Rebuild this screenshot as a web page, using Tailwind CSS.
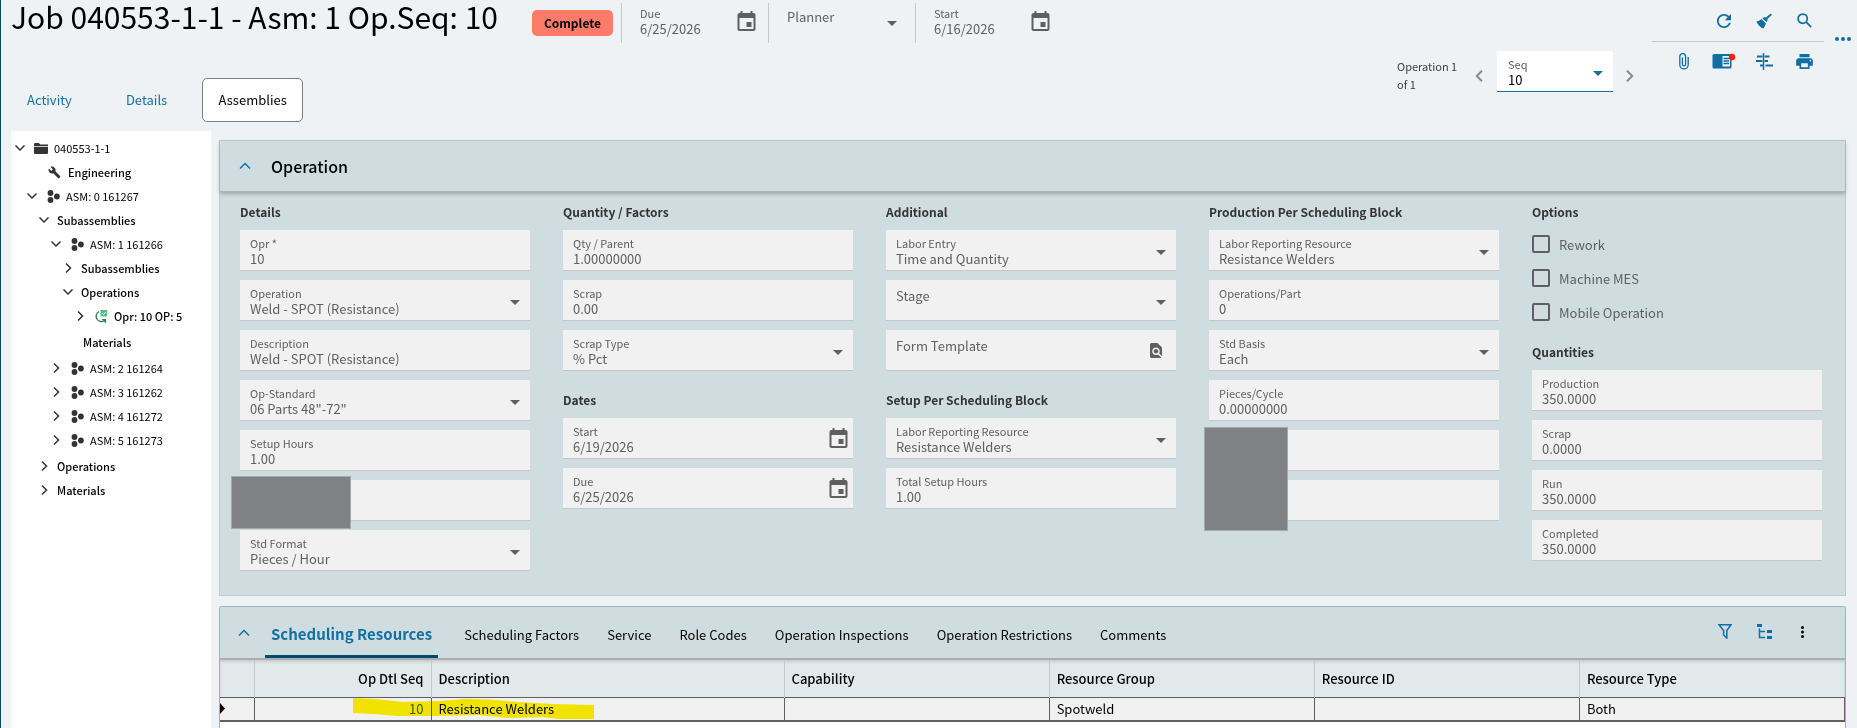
<!DOCTYPE html>
<html lang="en">
<head>
    <meta charset="UTF-8">
    <meta name="viewport" content="width=device-width, initial-scale=1.0">
    <title>Job 040553-1-1</title>
    <script src="https://cdn.jsdelivr.net/npm/@tailwindcss/browser@4"></script>
</head>

<body class="flex h-screen flex-col overflow-hidden border-l border-[#004b66] bg-[#eef2f5] font-['Noto_Sans_CJK_SC','Noto_Sans',sans-serif] text-[13px] text-black">

    <!-- Icon sprite -->
    <svg class="hidden">
        <symbol id="caret" viewBox="0 0 10 5"><path d="M0 0h10L5 5z" fill="currentColor"/></symbol>
        <symbol id="down" viewBox="0 0 12 12"><path d="M1.500 3.500 6 8l4.500-4.500" fill="none" stroke="currentColor" stroke-width="1.500"/></symbol>
        <symbol id="right" viewBox="0 0 12 12"><path d="M4 1.500 8.500 6 4 10.500" fill="none" stroke="currentColor" stroke-width="1.500"/></symbol>
        <symbol id="up" viewBox="0 0 12 12"><path d="M1 8.500 6 3.500l5 5" fill="none" stroke="currentColor" stroke-width="1.500"/></symbol>
        <symbol id="calendar" viewBox="3 1 18 20"><path d="M17 12h-5v5h5v-5zM16 1v2H8V1H6v2H5c-1.110 0-1.990.9-1.990 2L3 19c0 1.100.89 2 2 2h14c1.100 0 2-.9 2-2V5c0-1.100-.9-2-2-2h-1V1h-2zm3 18H5V8h14v11z" fill="currentColor"/></symbol>
        <symbol id="asm" viewBox="0 0 13 13"><g fill="currentColor"><circle cx="3.500" cy="3" r="2.900"/><circle cx="3.500" cy="10" r="2.900"/><circle cx="9.900" cy="6.500" r="2.900"/></g></symbol>
        <symbol id="folder" viewBox="0 0 14 11"><path d="M0 1.200Q0 0 1.200 0h3.600l1.500 1.400H14v1.500H0zM0 3.700h14v6.100Q14 11 12.800 11H1.200Q0 11 0 9.800z" fill="currentColor"/></symbol>
        <symbol id="wrench" viewBox="0 0 24 24"><path d="M22.700 19l-9.100-9.100c.9-2.300.4-5-1.500-6.900-2-2-5-2.400-7.400-1.300L9 6 6 9 1.600 4.700C.4 7.100.9 10.100 2.900 12.100c1.900 1.900 4.600 2.400 6.900 1.500l9.100 9.100c.4.4 1 .4 1.400 0l2.300-2.300c.5-.4.5-1.100.1-1.400z" fill="currentColor"/></symbol>
    </svg>

    <header class="flex shrink-0 items-start justify-between">
        <div class="pl-[10px]">
            <div class="flex h-[43px] items-start">
                <h1 class="text-[30px] leading-8 whitespace-nowrap">Job 040553-1-1 - Asm: 1 Op.Seq: 10</h1>
                <span class="mt-[10px] ml-[34px] flex h-[26px] w-[81px] items-center justify-center rounded-[5px] bg-[#ff7b69] text-[12px] font-bold">Complete</span>
                <div class="relative mt-[3px] ml-2 h-10 w-[147px] border-l border-[#c4c8ca] pt-[2px] pl-[18px] text-[#5f5f5f]">
                    <label for="due" class="block text-[11px] leading-4">Due</label>
                    <input id="due" type="text" value="6/25/2026" class="block h-4 w-20 leading-4 outline-none">
                    <button type="button" aria-label="Pick due date" class="absolute top-2 right-3"><svg class="h-5 w-[19px]"><use href="#calendar"/></svg></button>
                </div>
                <div class="relative mt-[3px] h-10 w-[147px] border-l border-[#c4c8ca] pt-[6px] pl-[18px] text-[#5f5f5f]">
                    <label for="planner" class="block leading-4">Planner</label>
                    <select id="planner" class="absolute inset-0 w-full appearance-none outline-none"><option></option></select>
                    <svg class="pointer-events-none absolute top-[18px] right-[18px] h-[5px] w-[10px]"><use href="#caret"/></svg>
                </div>
                <div class="relative mt-[3px] h-10 w-[147px] border-l border-[#c4c8ca] pt-[2px] pl-[18px] text-[#5f5f5f]">
                    <label for="start" class="block text-[11px] leading-4">Start</label>
                    <input id="start" type="text" value="6/16/2026" class="block h-4 w-20 leading-4 outline-none">
                    <button type="button" aria-label="Pick start date" class="absolute top-2 right-3"><svg class="h-5 w-[19px]"><use href="#calendar"/></svg></button>
                </div>
            </div>
            <nav class="mt-[35px] mb-[9px] flex h-11 items-center text-[13px] text-[#1270a3]">
                <a href="#" class="pl-4">Activity</a>
                <a href="#" class="pl-[54px]">Details</a>
                <a href="#" class="ml-[35px] flex h-11 w-[101px] items-center justify-center rounded-[5px] border border-[#7d7d7d] bg-white text-black">Assemblies</a>
            </nav>
        </div>

        <div class="flex items-start">
            <p class="mt-[57px] w-[66px] text-[11px] leading-[18px] text-[#3c3c3c]">Operation 1 of 1</p>
            <button type="button" aria-label="Previous operation" class="mt-[66px] ml-[6px] flex h-5 w-5 items-center justify-center text-[#8a8a8a]">
                <svg class="h-3 w-2" viewBox="0 0 8 12"><path d="M7 .8 1.800 6 7 11.200" fill="none" stroke="currentColor" stroke-width="2"/></svg>
            </button>
            <div class="relative mt-[51px] ml-2 h-[41px] w-[116px] border-b border-[#1270a3] bg-white pt-[5px] pl-[11px]">
                <label for="seq" class="block text-[11px] leading-4 text-[#5f5f5f]">Seq</label>
                <select id="seq" class="block h-4 w-full appearance-none leading-4 outline-none"><option>10</option></select>
                <svg class="pointer-events-none absolute top-5 right-[10px] h-[5px] w-[10px] text-[#1270a3]"><use href="#caret"/></svg>
            </div>
            <button type="button" aria-label="Next operation" class="mt-[66px] ml-[7px] flex h-5 w-5 items-center justify-center text-[#8a8a8a]">
                <svg class="h-3 w-2" viewBox="0 0 8 12"><path d="M1 .8 6.200 6 1 11.200" fill="none" stroke="currentColor" stroke-width="2"/></svg>
            </button>
            <div class="ml-3 w-[172px] text-[#0f6ea2]">
                <div class="flex h-[42px] items-center justify-end border-b border-[#c4c8ca]">
                    <button type="button" aria-label="Refresh" class="flex w-10 justify-center">
                        <svg class="h-[14px] w-[14px]" viewBox="4 4 16 16"><path d="M17.650 6.350C16.200 4.900 14.210 4 12 4c-4.420 0-7.990 3.580-7.990 8s3.570 8 7.990 8c3.730 0 6.840-2.550 7.730-6h-2.080c-.82 2.330-3.040 4-5.650 4-3.310 0-6-2.690-6-6s2.690-6 6-6c1.660 0 3.140.69 4.220 1.780L13 11h7V4l-2.350 2.350z" fill="currentColor"/></svg>
                    </button>
                    <button type="button" aria-label="Clear" class="flex w-10 justify-center">
                        <svg class="h-4 w-4" viewBox="0 0 16 16"><path d="M14.700.5 16 1.800l-4.600 4.300q.6 1.600-.8 3.200L6.300 5.200q1.700-1.400 3.600-.7zM5.500 6l4.500 4.400q-1.200 3-2.500 5Q3.300 14.500.3 8.500 3.300 8.200 5.500 6z" fill="currentColor"/></svg>
                    </button>
                    <button type="button" aria-label="Search" class="flex w-10 justify-center">
                        <svg class="h-[15px] w-[15px]" viewBox="0 0 15 15" fill="none" stroke="currentColor" stroke-width="1.700"><circle cx="5.700" cy="5.700" r="4.600"/><path d="m9.200 9.200 5 5"/></svg>
                    </button>
                </div>
                <div class="flex h-[38px] items-center justify-end">
                    <button type="button" aria-label="Attachments" class="flex w-10 justify-center">
                        <svg class="h-[17px] w-[10px]" viewBox="0 0 10 17" fill="none" stroke="currentColor" stroke-width="1.300"><path d="M9.200 4v7.700a4.200 4.200 0 0 1-8.400 0V3.600a2.900 2.900 0 0 1 5.800 0v7.600a1.600 1.600 0 0 1-3.200 0V4.500"/></svg>
                    </button>
                    <button type="button" aria-label="Memo" class="flex w-10 justify-center">
                        <svg class="h-4 w-6" viewBox="0 0 24 16"><rect x=".5" y="1" width="19" height="14.500" rx="1.500" fill="currentColor"/><path d="M10.500 3H18v10.500h-7.500z" fill="#eef2f5"/><path d="M11.500 5.500h5.500M11.500 8h5.500M11.500 10.500h5.500" stroke="currentColor" stroke-width="1.400"/><circle cx="20" cy="4" r="3.200" fill="#ff1a0a"/></svg>
                    </button>
                    <button type="button" aria-label="Schedule" class="flex w-10 justify-center">
                        <svg class="h-[17px] w-[17px]" viewBox="0 0 17 17" fill="none" stroke="currentColor" stroke-width="2"><path d="M7.500 0v17" stroke-width="1.500"/><path d="M1 3.500h5.500M0 8h6.500M4 12.500h3M8.500 3.500h5M8.500 8h3.500M9.500 12.500H17"/></svg>
                    </button>
                    <button type="button" aria-label="Print" class="flex w-10 justify-center">
                        <svg class="h-[15px] w-[17px]" viewBox="2 3 20 18"><path d="M19 8H5c-1.660 0-3 1.340-3 3v6h4v4h12v-4h4v-6c0-1.660-1.340-3-3-3zm-3 11H8v-5h8v5zm3-7c-.55 0-1-.45-1-1s.45-1 1-1 1 .45 1 1-.45 1-1 1zm-1-9H6v4h12V3z" fill="currentColor"/></svg>
                    </button>
                </div>
            </div>
            <button type="button" aria-label="More" class="mt-[37px] ml-1 flex w-[29px] justify-center text-[#0f6ea2]">
                <svg class="h-1 w-4" viewBox="0 0 16 4" fill="currentColor"><circle cx="2" cy="2" r="2"/><circle cx="8" cy="2" r="2"/><circle cx="14" cy="2" r="2"/></svg>
            </button>
        </div>
    </header>

    <div class="flex min-h-0 flex-1 pl-[10px]">

        <!-- Job tree -->
        <aside class="w-[200px] shrink-0 bg-white pt-[5px] text-[11px] leading-6 whitespace-nowrap">
            <ul>
                <li class="flex h-6 items-center pl-[3px]"><svg class="h-3 w-3 text-[#333]"><use href="#down"/></svg><svg class="ml-2 h-[11px] w-[14px] text-[#333]"><use href="#folder"/></svg><span class="pl-[6px]">040553-1-1</span></li>
                <li class="flex h-6 items-center pl-[37px]"><svg class="h-[13px] w-[13px] text-[#333]"><use href="#wrench"/></svg><span class="pl-[7px] font-medium">Engineering</span></li>
                <li class="flex h-6 items-center pl-[15px]"><svg class="h-3 w-3 text-[#333]"><use href="#down"/></svg><svg class="ml-[9px] h-[13px] w-[13px] text-[#333]"><use href="#asm"/></svg><span class="pl-[6px]">ASM: 0 161267</span></li>
                <li class="flex h-6 items-center pl-[27px]"><svg class="h-3 w-3 text-[#333]"><use href="#down"/></svg><span class="pl-[7px] font-medium">Subassemblies</span></li>
                <li class="flex h-6 items-center pl-[39px]"><svg class="h-3 w-3 text-[#333]"><use href="#down"/></svg><svg class="ml-[9px] h-[13px] w-[13px] text-[#333]"><use href="#asm"/></svg><span class="pl-[6px]">ASM: 1 161266</span></li>
                <li class="flex h-6 items-center pl-[51px]"><svg class="h-3 w-3 text-[#333]"><use href="#right"/></svg><span class="pl-[7px] font-medium">Subassemblies</span></li>
                <li class="flex h-6 items-center pl-[51px]"><svg class="h-3 w-3 text-[#333]"><use href="#down"/></svg><span class="pl-[7px] font-medium">Operations</span></li>
                <li class="flex h-6 items-center pl-[63px]"><svg class="h-3 w-3 text-[#333]"><use href="#right"/></svg><svg class="ml-[8px] h-[13px] w-[13px]" viewBox="0 0 13 13"><path d="M5 1.500A5 5 0 1 0 10 11" fill="none" stroke="#2f7d55" stroke-width="1.300"/><path d="M7.500 9H12v4.500z" fill="#2f7d55"/><path d="M6.500 0H13v6.500H6.500z" fill="#4fc08d"/><path d="m8 3.200 1.400 1.400 2.300-2.600" fill="none" stroke="#fff"/></svg><span class="pl-[7px] font-medium">Opr: 10 OP: 5</span></li>
                <li class="my-0.5 flex h-6 items-center pl-[72px]"><span class="font-medium">Materials</span></li>
                <li class="flex h-6 items-center pl-[39px]"><svg class="h-3 w-3 text-[#333]"><use href="#right"/></svg><svg class="ml-[9px] h-[13px] w-[13px] text-[#333]"><use href="#asm"/></svg><span class="pl-[6px]">ASM: 2 161264</span></li>
                <li class="flex h-6 items-center pl-[39px]"><svg class="h-3 w-3 text-[#333]"><use href="#right"/></svg><svg class="ml-[9px] h-[13px] w-[13px] text-[#333]"><use href="#asm"/></svg><span class="pl-[6px]">ASM: 3 161262</span></li>
                <li class="flex h-6 items-center pl-[39px]"><svg class="h-3 w-3 text-[#333]"><use href="#right"/></svg><svg class="ml-[9px] h-[13px] w-[13px] text-[#333]"><use href="#asm"/></svg><span class="pl-[6px]">ASM: 4 161272</span></li>
                <li class="flex h-6 items-center pl-[39px]"><svg class="h-3 w-3 text-[#333]"><use href="#right"/></svg><svg class="ml-[9px] h-[13px] w-[13px] text-[#333]"><use href="#asm"/></svg><span class="pl-[6px]">ASM: 5 161273</span></li>
                <li class="mt-0.5 flex h-6 items-center pl-[27px]"><svg class="h-3 w-3 text-[#333]"><use href="#right"/></svg><span class="pl-[7px] font-medium">Operations</span></li>
                <li class="flex h-6 items-center pl-[27px]"><svg class="h-3 w-3 text-[#333]"><use href="#right"/></svg><span class="pl-[7px] font-medium">Materials</span></li>
            </ul>
        </aside>

        <main class="flex min-w-0 flex-1 flex-col pt-[9px] pr-[11px] pl-2">

            <!-- Operation panel -->
            <section class="shrink-0 border border-[#c4c8ca] bg-[#d0dde0]">
                <div class="flex h-[51px] items-center border-b border-[#a9b5b9] pl-[19px] shadow-[0_2px_4px_rgba(0,0,0,0.25)]">
                    <button type="button" aria-label="Collapse" class="text-[#1270a3]"><svg class="h-3 w-3"><use href="#up"/></svg></button>
                    <h2 class="pl-5 text-[16px] font-medium">Operation</h2>
                </div>

                <div class="grid grid-cols-5 gap-x-[33px] pt-[10px] pr-[23px] pb-6 pl-5 text-[#5f5f5f]">
                    <div class="flex flex-col gap-[9px]">
                        <h3 class="-mb-px h-5 text-[12px] leading-5 font-bold text-[#333]">Details</h3>
                        <div class="h-[41px] border-b border-[#c6c6c6] bg-[#f1f1f1] px-[10px] pt-[5px]">
                            <label for="opr" class="block text-[11px] leading-4">Opr *</label>
                            <input id="opr" type="text" value="10" class="block h-4 w-full leading-4 outline-none">
                        </div>
                        <div class="relative h-[41px] border-b border-[#c6c6c6] bg-[#f1f1f1] px-[10px] pt-[5px]">
                            <label for="operation" class="block text-[11px] leading-4">Operation</label>
                            <select id="operation" class="block h-4 w-full appearance-none leading-4 outline-none"><option>Weld - SPOT (Resistance)</option></select>
                            <svg class="pointer-events-none absolute top-5 right-[10px] h-[5px] w-[10px]"><use href="#caret"/></svg>
                        </div>
                        <div class="h-[41px] border-b border-[#c6c6c6] bg-[#f1f1f1] px-[10px] pt-[5px]">
                            <label for="description" class="block text-[11px] leading-4">Description</label>
                            <input id="description" type="text" value="Weld - SPOT (Resistance)" class="block h-4 w-full leading-4 outline-none">
                        </div>
                        <div class="relative h-[41px] border-b border-[#c6c6c6] bg-[#f1f1f1] px-[10px] pt-[5px]">
                            <label for="op-standard" class="block text-[11px] leading-4">Op-Standard</label>
                            <select id="op-standard" class="block h-4 w-full appearance-none leading-4 outline-none"><option>06 Parts 48"-72"</option></select>
                            <svg class="pointer-events-none absolute top-5 right-[10px] h-[5px] w-[10px]"><use href="#caret"/></svg>
                        </div>
                        <div class="h-[41px] border-b border-[#c6c6c6] bg-[#f1f1f1] px-[10px] pt-[5px]">
                            <label for="setup-hours" class="block text-[11px] leading-4">Setup Hours</label>
                            <input id="setup-hours" type="text" value="1.00" class="block h-4 w-full leading-4 outline-none">
                        </div>
                        <div class="relative h-[41px] border-b border-[#c6c6c6] bg-[#f1f1f1] px-[10px] pt-[5px]">
                            <input type="text" aria-label="Production standard" class="block h-8 w-full outline-none">
                            <div class="absolute -top-1 -left-[9px] h-[53px] w-[120px] border border-[#a3a9ac] bg-[#808184]"></div>
                        </div>
                        <div class="relative h-[41px] border-b border-[#c6c6c6] bg-[#f1f1f1] px-[10px] pt-[5px]">
                            <label for="std-format" class="block text-[11px] leading-4">Std Format</label>
                            <select id="std-format" class="block h-4 w-full appearance-none leading-4 outline-none"><option>Pieces / Hour</option></select>
                            <svg class="pointer-events-none absolute top-5 right-[10px] h-[5px] w-[10px]"><use href="#caret"/></svg>
                        </div>
                    </div>

                    <div class="flex flex-col gap-[9px]">
                        <h3 class="-mb-px h-5 text-[12px] leading-5 font-bold text-[#333]">Quantity / Factors</h3>
                        <div class="h-[41px] border-b border-[#c6c6c6] bg-[#f1f1f1] px-[10px] pt-[5px]">
                            <label for="qty-parent" class="block text-[11px] leading-4">Qty / Parent</label>
                            <input id="qty-parent" type="text" value="1.00000000" class="block h-4 w-full leading-4 outline-none">
                        </div>
                        <div class="h-[41px] border-b border-[#c6c6c6] bg-[#f1f1f1] px-[10px] pt-[5px]">
                            <label for="scrap" class="block text-[11px] leading-4">Scrap</label>
                            <input id="scrap" type="text" value="0.00" class="block h-4 w-full leading-4 outline-none">
                        </div>
                        <div class="relative h-[41px] border-b border-[#c6c6c6] bg-[#f1f1f1] px-[10px] pt-[5px]">
                            <label for="scrap-type" class="block text-[11px] leading-4">Scrap Type</label>
                            <select id="scrap-type" class="block h-4 w-full appearance-none leading-4 outline-none"><option>% Pct</option></select>
                            <svg class="pointer-events-none absolute top-5 right-[10px] h-[5px] w-[10px]"><use href="#caret"/></svg>
                        </div>
                        <h3 class="mt-[10px] -mb-px h-5 text-[12px] leading-5 font-bold text-[#333]">Dates</h3>
                        <div class="relative h-[41px] border-b border-[#c6c6c6] bg-[#f1f1f1] px-[10px] pt-[5px]">
                            <label for="date-start" class="block text-[11px] leading-4">Start</label>
                            <input id="date-start" type="text" value="6/19/2026" class="block h-4 w-full leading-4 outline-none">
                            <button type="button" aria-label="Pick start date" class="absolute top-[10px] right-[5px]"><svg class="block h-5 w-[19px]"><use href="#calendar"/></svg></button>
                        </div>
                        <div class="relative h-[41px] border-b border-[#c6c6c6] bg-[#f1f1f1] px-[10px] pt-[5px]">
                            <label for="date-due" class="block text-[11px] leading-4">Due</label>
                            <input id="date-due" type="text" value="6/25/2026" class="block h-4 w-full leading-4 outline-none">
                            <button type="button" aria-label="Pick due date" class="absolute top-[10px] right-[5px]"><svg class="block h-5 w-[19px]"><use href="#calendar"/></svg></button>
                        </div>
                    </div>

                    <div class="flex flex-col gap-[9px]">
                        <h3 class="-mb-px h-5 text-[12px] leading-5 font-bold text-[#333]">Additional</h3>
                        <div class="relative h-[41px] border-b border-[#c6c6c6] bg-[#f1f1f1] px-[10px] pt-[5px]">
                            <label for="labor-entry" class="block text-[11px] leading-4">Labor Entry</label>
                            <select id="labor-entry" class="block h-4 w-full appearance-none leading-4 outline-none"><option>Time and Quantity</option></select>
                            <svg class="pointer-events-none absolute top-5 right-[10px] h-[5px] w-[10px]"><use href="#caret"/></svg>
                        </div>
                        <div class="relative h-[41px] border-b border-[#c6c6c6] bg-[#f1f1f1] px-[10px] pt-2">
                            <label for="stage" class="block leading-4">Stage</label>
                            <select id="stage" class="absolute inset-0 w-full appearance-none outline-none"><option></option></select>
                            <svg class="pointer-events-none absolute top-5 right-[10px] h-[5px] w-[10px]"><use href="#caret"/></svg>
                        </div>
                        <div class="relative h-[41px] border-b border-[#c6c6c6] bg-[#f1f1f1] px-[10px] pt-2">
                            <label for="form-template" class="block leading-4">Form Template</label>
                            <input id="form-template" type="text" class="absolute inset-0 w-full outline-none">
                            <button type="button" aria-label="Find template" class="absolute top-[13px] right-[14px]">
                                <svg class="block h-[15px] w-3" viewBox="4 2 16 20"><path d="M20 19.590V8l-6-6H6c-1.100 0-1.990.9-1.990 2L4 20c0 1.100.89 2 1.990 2H18c.45 0 .85-.15 1.190-.4l-4.430-4.430c-.8.52-1.740.83-2.760.83-2.760 0-5-2.240-5-5s2.240-5 5-5 5 2.240 5 5c0 1.020-.31 1.960-.83 2.750L20 19.590zM9 13c0 1.660 1.340 3 3 3s3-1.340 3-3-1.340-3-3-3-3 1.340-3 3z" fill="currentColor"/></svg>
                            </button>
                        </div>
                        <h3 class="mt-[10px] -mb-px h-5 text-[12px] leading-5 font-bold text-[#333]">Setup Per Scheduling Block</h3>
                        <div class="relative h-[41px] border-b border-[#c6c6c6] bg-[#f1f1f1] px-[10px] pt-[5px]">
                            <label for="setup-resource" class="block text-[11px] leading-4">Labor Reporting Resource</label>
                            <select id="setup-resource" class="block h-4 w-full appearance-none leading-4 outline-none"><option>Resistance Welders</option></select>
                            <svg class="pointer-events-none absolute top-5 right-[10px] h-[5px] w-[10px]"><use href="#caret"/></svg>
                        </div>
                        <div class="h-[41px] border-b border-[#c6c6c6] bg-[#f1f1f1] px-[10px] pt-[5px]">
                            <label for="total-setup" class="block text-[11px] leading-4">Total Setup Hours</label>
                            <input id="total-setup" type="text" value="1.00" class="block h-4 w-full leading-4 outline-none">
                        </div>
                    </div>

                    <div class="flex flex-col gap-[9px]">
                        <h3 class="-mb-px h-5 text-[12px] leading-5 font-bold text-[#333]">Production Per Scheduling Block</h3>
                        <div class="relative h-[41px] border-b border-[#c6c6c6] bg-[#f1f1f1] px-[10px] pt-[5px]">
                            <label for="prod-resource" class="block text-[11px] leading-4">Labor Reporting Resource</label>
                            <select id="prod-resource" class="block h-4 w-full appearance-none leading-4 outline-none"><option>Resistance Welders</option></select>
                            <svg class="pointer-events-none absolute top-5 right-[10px] h-[5px] w-[10px]"><use href="#caret"/></svg>
                        </div>
                        <div class="h-[41px] border-b border-[#c6c6c6] bg-[#f1f1f1] px-[10px] pt-[5px]">
                            <label for="ops-part" class="block text-[11px] leading-4">Operations/Part</label>
                            <input id="ops-part" type="text" value="0" class="block h-4 w-full leading-4 outline-none">
                        </div>
                        <div class="relative h-[41px] border-b border-[#c6c6c6] bg-[#f1f1f1] px-[10px] pt-[5px]">
                            <label for="std-basis" class="block text-[11px] leading-4">Std Basis</label>
                            <select id="std-basis" class="block h-4 w-full appearance-none leading-4 outline-none"><option>Each</option></select>
                            <svg class="pointer-events-none absolute top-5 right-[10px] h-[5px] w-[10px]"><use href="#caret"/></svg>
                        </div>
                        <div class="h-[41px] border-b border-[#c6c6c6] bg-[#f1f1f1] px-[10px] pt-[5px]">
                            <label for="pieces-cycle" class="block text-[11px] leading-4">Pieces/Cycle</label>
                            <input id="pieces-cycle" type="text" value="0.00000000" class="block h-4 w-full leading-4 outline-none">
                        </div>
                        <div class="relative flex flex-col gap-[9px]">
                            <div class="h-[41px] border-b border-[#c6c6c6] bg-[#f1f1f1] px-[10px] pt-[5px]">
                                <input type="text" aria-label="Cycle time" class="block h-8 w-full outline-none">
                            </div>
                            <div class="h-[41px] border-b border-[#c6c6c6] bg-[#f1f1f1] px-[10px] pt-[5px]">
                                <input type="text" aria-label="Block time" class="block h-8 w-full outline-none">
                            </div>
                            <div class="absolute -top-[3px] -left-[5px] h-[104px] w-[84px] border border-[#a3a9ac] bg-[#808184]"></div>
                        </div>
                    </div>

                    <div class="flex flex-col gap-[9px]">
                        <h3 class="-mb-px h-5 text-[12px] leading-5 font-bold text-[#333]">Options</h3>
                        <div class="flex flex-col gap-[6px]">
                            <label class="flex h-7 items-center gap-[9px]"><input type="checkbox" class="h-[18px] w-[18px] appearance-none rounded-[2px] border-2 border-[#5f5f5f]"><span class="pt-0.5">Rework</span></label>
                            <label class="flex h-7 items-center gap-[9px]"><input type="checkbox" class="h-[18px] w-[18px] appearance-none rounded-[2px] border-2 border-[#5f5f5f]"><span class="pt-0.5">Machine MES</span></label>
                            <label class="flex h-7 items-center gap-[9px]"><input type="checkbox" class="h-[18px] w-[18px] appearance-none rounded-[2px] border-2 border-[#5f5f5f]"><span class="pt-0.5">Mobile Operation</span></label>
                        </div>
                        <h3 class="mt-[7px] -mb-px h-5 text-[12px] leading-5 font-bold text-[#333]">Quantities</h3>
                        <div class="h-[41px] border-b border-[#c6c6c6] bg-[#f1f1f1] px-[10px] pt-[5px]">
                            <label for="q-production" class="block text-[11px] leading-4">Production</label>
                            <input id="q-production" type="text" value="350.0000" class="block h-4 w-full leading-4 outline-none">
                        </div>
                        <div class="h-[41px] border-b border-[#c6c6c6] bg-[#f1f1f1] px-[10px] pt-[5px]">
                            <label for="q-scrap" class="block text-[11px] leading-4">Scrap</label>
                            <input id="q-scrap" type="text" value="0.0000" class="block h-4 w-full leading-4 outline-none">
                        </div>
                        <div class="h-[41px] border-b border-[#c6c6c6] bg-[#f1f1f1] px-[10px] pt-[5px]">
                            <label for="q-run" class="block text-[11px] leading-4">Run</label>
                            <input id="q-run" type="text" value="350.0000" class="block h-4 w-full leading-4 outline-none">
                        </div>
                        <div class="h-[41px] border-b border-[#c6c6c6] bg-[#f1f1f1] px-[10px] pt-[5px]">
                            <label for="q-completed" class="block text-[11px] leading-4">Completed</label>
                            <input id="q-completed" type="text" value="350.0000" class="block h-4 w-full leading-4 outline-none">
                        </div>
                    </div>
                </div>
            </section>

            <!-- Scheduling resources panel -->
            <section class="mt-[10px] flex-1 rounded-t-[3px] border border-b-0 border-[#8fb8c0] bg-white">
                <div class="flex h-[53px] items-stretch rounded-t-[2px] border-b-2 border-[#a9aeb0] bg-[#d0dde0] pl-[18px] whitespace-nowrap">
                    <button type="button" aria-label="Collapse" class="text-[#1270a3]"><svg class="h-3 w-3"><use href="#up"/></svg></button>
                    <nav class="flex items-stretch gap-7 pl-[15px]">
                        <a href="#" class="-mr-[2px] flex items-center border-b-[3px] border-[#004b6e] px-[6px] pt-[6px] text-[15px] font-bold text-[#1270a3]">Scheduling Resources</a>
                        <a href="#" class="flex items-center pt-1">Scheduling Factors</a>
                        <a href="#" class="flex items-center pt-1">Service</a>
                        <a href="#" class="flex items-center pt-1">Role Codes</a>
                        <a href="#" class="flex items-center pt-1">Operation Inspections</a>
                        <a href="#" class="flex items-center pt-1">Operation Restrictions</a>
                        <a href="#" class="flex items-center pt-1">Comments</a>
                    </nav>
                    <div class="mr-[26px] ml-auto flex items-center pb-0.5 text-[#0f6ea2]">
                        <button type="button" aria-label="Filter" class="flex w-10 justify-center"><svg class="h-[15px] w-[14px]" viewBox="0 0 14 15"><path d="M1 .8h12L8.800 6.500V14L5.600 11V6.500z" fill="none" stroke="currentColor" stroke-width="1.500"/></svg></button>
                        <button type="button" aria-label="Tree view" class="flex w-10 justify-center"><svg class="h-[15px] w-4" viewBox="0 0 16 15"><path d="M0 0h5v3H0zM10 6h5v3h-5zM10 12h5v3h-5z" fill="currentColor"/><path d="M2.500 4.500v9H8M2.500 7.500H8" fill="none" stroke="currentColor" stroke-width="1.500"/></svg></button>
                        <button type="button" aria-label="More actions" class="flex w-[34px] justify-center text-black"><svg class="h-3 w-[3px]" viewBox="0 0 3 12" fill="currentColor"><circle cx="1.500" cy="1.500" r="1.500"/><circle cx="1.500" cy="6" r="1.500"/><circle cx="1.500" cy="10.500" r="1.500"/></svg></button>
                    </div>
                </div>
                <div class="relative">
                    <table class="w-full table-fixed border-collapse text-left">
                        <colgroup>
                            <col class="w-[34px]">
                            <col class="w-[177px]">
                            <col class="w-[353px]">
                            <col>
                            <col>
                            <col>
                            <col>
                        </colgroup>
                        <thead>
                            <tr class="h-[37px] bg-[#e2e9eb] shadow-[inset_0_2px_3px_rgba(0,0,0,0.12)]">
                                <th class="border-r border-[#c4c8ca]"></th>
                                <th class="border-r border-[#c4c8ca] px-[7px] text-right font-medium">Op Dtl Seq</th>
                                <th class="border-r border-[#c4c8ca] px-[7px] font-medium">Description</th>
                                <th class="border-r border-[#c4c8ca] px-[7px] font-medium">Capability</th>
                                <th class="border-r border-[#c4c8ca] px-[7px] font-medium">Resource Group</th>
                                <th class="border-r border-[#c4c8ca] px-[7px] font-medium">Resource ID</th>
                                <th class="px-[7px] font-medium">Resource Type</th>
                            </tr>
                        </thead>
                        <tbody>
                            <tr class="h-6 border-t border-b-2 border-[#606060] bg-[#f1f1f1] leading-5">
                                <td class="border-r border-[#606060]"><svg class="h-[11px] w-[5px]" viewBox="0 0 5 11"><path d="M0 0v11l5-5.500z"/></svg></td>
                                <td class="border-r border-[#606060] px-[7px] text-right text-[#3c5a3c]">10</td>
                                <td class="border-r border-[#606060] px-[7px]">Resistance Welders</td>
                                <td class="border-r border-[#606060]"></td>
                                <td class="border-r border-[#606060] px-[7px]">Spotweld</td>
                                <td class="border-r border-[#606060]"></td>
                                <td class="border-r border-[#606060] px-[7px]">Both</td>
                            </tr>
                        </tbody>
                    </table>
                    <!-- Marker stroke over the selected resource -->
                    <svg class="pointer-events-none absolute top-[38px] left-[133px] h-[22px] w-[241px] mix-blend-multiply" viewBox="0 0 241 22"><path d="M0 0 22 1 50 4 88 3 112 1 135 1.500 165 4 200 6 241 7V21L205 21 190 19 155 20 125 17 80 18 45 18 20 16 0 15z" fill="#fff000"/></svg>
                </div>
            </section>
        </main>
    </div>
</body>
</html>
